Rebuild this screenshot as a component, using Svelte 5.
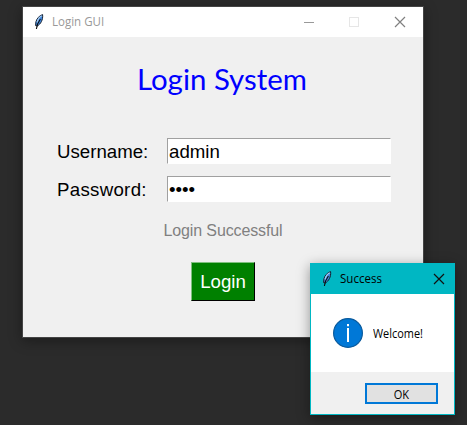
<script>
  let username = $state('admin');
  let password = $state('1234');
</script>

{#snippet feather()}
  <svg class="feather" width="12" height="18" viewBox="0 0 12 18">
    <path d="M9.6 1.6C6.5 2.6 3.6 5.5 2.9 9L2.6 12.6l1.8.4C7.6 11 10.2 7 9.6 1.6Z" fill="#3f86dc" stroke="#17202e" stroke-width="1" />
    <path d="M8.8 2.8C6.5 4 4.7 6.4 4 9.4" fill="none" stroke="#a9cdf3" stroke-width="1.2" />
    <path d="M7.4 6C5.6 8.4 3.9 11 3.4 16" fill="none" stroke="#0c0c0c" stroke-width="1.1" />
  </svg>
{/snippet}

<main class="desktop">
  <section class="window">
    <header class="titlebar">
      {@render feather()}
      <span class="caption"><span>Login GUI</span></span>
      <svg class="controls" width="110" height="12" viewBox="0 0 110 12" fill="none" shape-rendering="crispEdges">
        <path d="M1 6.5H11" stroke="#999" />
        <rect x="46.5" y="1.5" width="9" height="9" stroke="#e6e6e6" />
        <path d="M92 1L102 11M102 1L92 11" stroke="#808080" stroke-width="1.2" shape-rendering="auto" />
      </svg>
    </header>
    <div class="content">
      <h1><span>Login System</span></h1>
      <label class="row"><span>Username:</span><input type="text" bind:value={username} /></label>
      <label class="row"><span class="wide">Password:</span><input class="secret" type="password" bind:value={password} /></label>
      <p class="status">Login Successful</p>
      <button class="login">Login</button>
    </div>
  </section>

  <section class="dialog">
    <header class="dialog-title">
      {@render feather()}
      <span class="caption"><span>Success</span></span>
      <svg class="close" width="12" height="12" viewBox="0 0 12 12"><path d="M1 1L11 11M11 1L1 11" stroke="#111" stroke-width="1.2" /></svg>
    </header>
    <div class="message">
      <svg width="30" height="30" viewBox="0 0 30 30">
        <circle cx="15" cy="15" r="14.4" fill="#0078d7" stroke="#0a5a9c" stroke-width="1.2" />
        <path d="M15 6v2.2M15 10v14" stroke="#fff" stroke-width="2" />
      </svg>
      <span class="text"><span>Welcome!</span></span>
    </div>
    <footer><button class="ok"><span>OK</span></button></footer>
  </section>
</main>

<style>
  :global(body) { margin: 0; }
  * { box-sizing: border-box; }
  .desktop {
    position: relative;
    width: 467px;
    height: 425px;
    overflow: hidden;
    background: #2b2b2b;
    font-family: "Open Sans", "Noto Sans", sans-serif;
    color: #000;
  }
  .window {
    position: absolute;
    left: 22px;
    top: 6px;
    width: 402px;
    height: 332px;
    border: 1px solid #444;
    background: #f0f0f0;
    box-shadow: 0 3px 12px rgba(0, 0, 0, .35);
  }
  .titlebar { display: flex; align-items: center; height: 30px; padding-left: 10px; background: #fff; }
  .feather { display: block; flex: none; }
  .caption { flex: 1; margin-left: 7px; font-size: 12px; line-height: 16px; white-space: nowrap; }
  .caption span, .text span, .ok span, h1 span { display: inline-block; transform-origin: left center; }
  .caption span { transform: scaleX(.96); }
  .titlebar .caption { color: #999; }
  .controls { margin-right: 10px; }
  .content { display: flex; flex-direction: column; align-items: center; }
  h1 {
    width: 170px;
    height: 40px;
    margin: 22px 0 39px;
    font: 400 28px/40px Lato, sans-serif;
    color: #00f;
    white-space: nowrap;
  }
  h1 span { transform: translateX(-1px) scaleX(1.05); }
  .row { display: flex; align-items: center; width: 334px; height: 26px; margin: 0 0 12px 2px; font: 18.67px/26px "Liberation Sans", Arial, sans-serif; }
  .row span { width: 110px; padding-top: 1px; }
  .wide { letter-spacing: .3px; }
  input {
    width: 224px;
    height: 26px;
    padding: 1px 1px 0;
    border: 1px solid;
    border-color: #a0a0a0 #fff #fff #a0a0a0;
    border-radius: 0;
    outline: 0;
    background: #fff;
    color: #000;
    font: inherit;
  }
  .status { margin: 7px 0 21px; font: 16px/20px "Liberation Sans", Arial, sans-serif; letter-spacing: -.13px; color: #808080; }
  .login {
    width: 64px;
    height: 39px;
    padding: 0;
    border: 1px solid;
    border-color: #80c080 #000 #000 #80c080;
    background: #008000;
    color: #fff;
    font: 18.67px/34px "Liberation Sans", Arial, sans-serif;
  }
  .dialog {
    position: absolute;
    left: 310px;
    top: 263px;
    width: 145px;
    height: 152px;
    border: 1px solid #00b7c3;
    background: #fff;
    box-shadow: 0 3px 12px rgba(0, 0, 0, .4);
  }
  .dialog-title { display: flex; align-items: center; height: 30px; padding-left: 10px; background: #00b7c3; }
  .close { margin-right: 9px; }
  .message { display: flex; align-items: center; height: 78px; padding-left: 22px; font-size: 12px; }
  .text { margin-left: 10px; padding-top: 1px; white-space: nowrap; }
  .text span { transform: scaleX(.91); }
  footer { display: flex; justify-content: flex-end; height: 42px; padding: 11px 16px; background: #f0f0f0; }
  .ok { width: 73px; height: 21px; padding: 0; border: 2px solid #0078d7; background: #e1e1e1; color: #000; font: 12px/16px "Open Sans", sans-serif; }
  .ok span { transform-origin: center; transform: translateY(.5px) scaleX(.92); }
</style>
